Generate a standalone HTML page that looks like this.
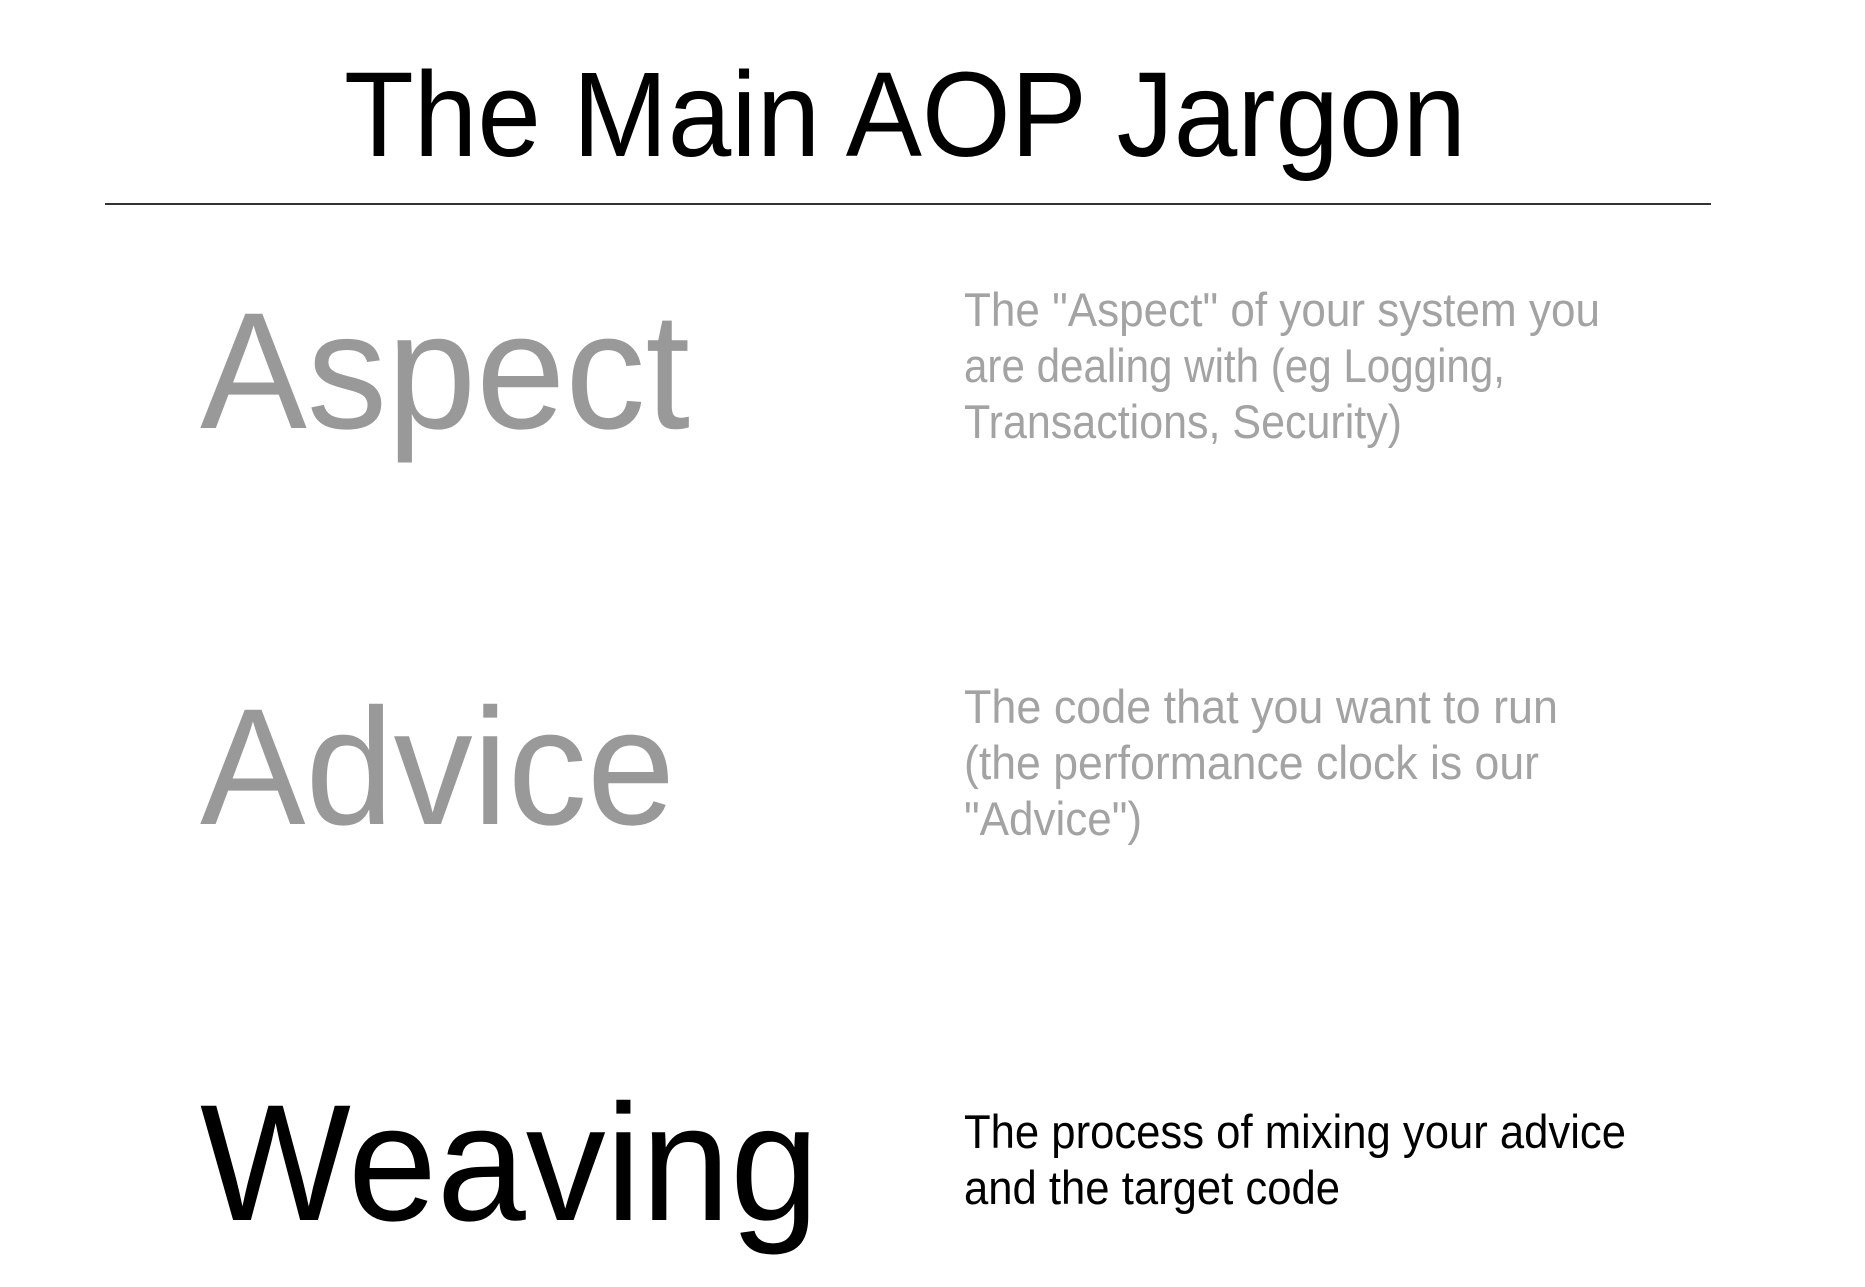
<!DOCTYPE html>
<html><head><meta charset="utf-8"><style>
html,body{margin:0;padding:0;background:#fff;}
svg{display:block;}
text{font-family:"Liberation Sans",sans-serif;}
</style></head><body>
<svg width="1865" height="1287" viewBox="0 0 1865 1287" xmlns="http://www.w3.org/2000/svg">
<rect width="1865" height="1287" fill="#fff"/>
<text x="344" y="156" font-size="121" fill="#000" textLength="1122" lengthAdjust="spacingAndGlyphs">The Main AOP Jargon</text>
<rect x="105" y="203" width="1606" height="2" fill="#333"/>

<text x="200" y="428" font-size="166" fill="#999" textLength="490" lengthAdjust="spacingAndGlyphs">Aspect</text>
<g font-size="47" fill="#a3a3a3">
<text x="964" y="326" textLength="636" lengthAdjust="spacingAndGlyphs">The "Aspect" of your system you</text>
<text x="964" y="382" textLength="541" lengthAdjust="spacingAndGlyphs">are dealing with (eg Logging,</text>
<text x="964" y="438" textLength="438" lengthAdjust="spacingAndGlyphs">Transactions, Security)</text>
</g>

<text x="200" y="824" font-size="166" fill="#999" textLength="475" lengthAdjust="spacingAndGlyphs">Advice</text>
<g font-size="47" fill="#a3a3a3">
<text x="964" y="723" textLength="594" lengthAdjust="spacingAndGlyphs">The code that you want to run</text>
<text x="964" y="779" textLength="575" lengthAdjust="spacingAndGlyphs">(the performance clock is our</text>
<text x="964" y="835" textLength="178" lengthAdjust="spacingAndGlyphs">"Advice")</text>
</g>

<text x="200" y="1220" font-size="166" fill="#000" textLength="619" lengthAdjust="spacingAndGlyphs">Weaving</text>
<g font-size="47" fill="#000">
<text x="964" y="1148" textLength="662" lengthAdjust="spacingAndGlyphs">The process of mixing your advice</text>
<text x="964" y="1204" textLength="376" lengthAdjust="spacingAndGlyphs">and the target code</text>
</g>
</svg>
</body></html>
